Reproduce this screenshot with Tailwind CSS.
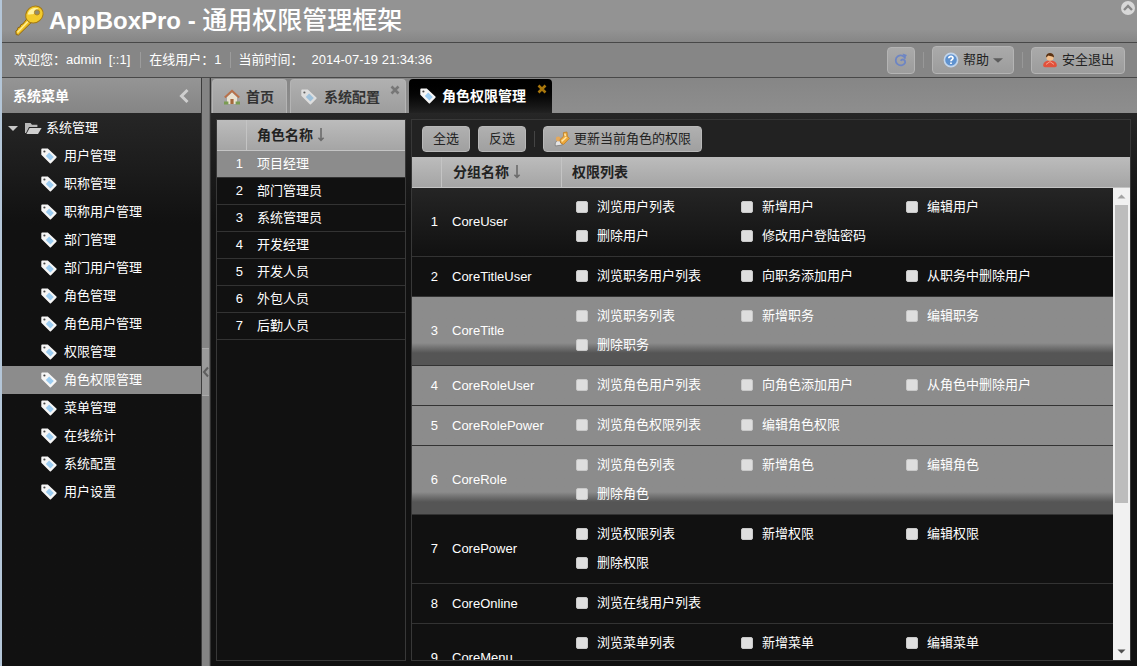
<!DOCTYPE html>
<html lang="zh-CN">
<head>
<meta charset="utf-8">
<title>AppBoxPro - 通用权限管理框架</title>
<script src="https://cdn.jsdelivr.net/npm/@tailwindcss/browser@4"></script>
</head>
<body class="h-screen overflow-hidden bg-[#848484] font-['Liberation_Sans','Noto_Sans_CJK_SC',sans-serif] text-[13px] leading-5 text-white">
<svg class="hidden">
  <symbol id="tag" viewBox="0 0 16 16">
    <path d="M.3 1.4 Q.3 .5 1.2 .5 L6.8 .5 L15.4 8.6 Q16 9.2 15.4 9.8 L10 15.2 Q9.4 15.8 8.8 15.2 L.3 6.8Z" fill="#f6f6f6"/>
    <path d="M8.2 4.4 L12.8 9 L9.4 12.6 L4.8 8Z" fill="#9ccdf2"/>
    <circle cx="3.4" cy="3.5" r="1.1" fill="#444"/>
  </symbol>
  <symbol id="sort" viewBox="0 0 8 14">
    <path d="M4 0V12M1.4 9.8L4 12.4L6.6 9.8" fill="none" stroke="#6b6b6b" stroke-width="1.6"/>
  </symbol>
</svg>
<div class="flex h-full flex-col border-l-2 border-[#b4c6d8]">
  <header class="relative flex h-[43px] shrink-0 items-center border-b border-[#484848] bg-linear-to-b from-[#939393] from-70% to-[#868686] pl-3">
    <svg class="mr-[3px] size-8 shrink-0" viewBox="0 0 32 32">
      <path d="M18.4 16.4L4.5 30 2.2 29.6 1.8 26 3.4 24.8 4 22.6 6 22 6.8 19.8 8.8 19 13.8 12.6Z" fill="#f0c022" stroke="#8d6410" stroke-width="1"/>
      <path d="M15.8 14.6L3.4 27.4" stroke="#fff09a" stroke-width="1.5"/>
      <ellipse cx="20.4" cy="9.6" rx="9.2" ry="8" transform="rotate(-40 20.4 9.6)" fill="#f3cb2c" stroke="#a67a12"/>
      <path d="M13.6 9.4C14.6 4.5 19.2 2 24.4 3.6 22.4 8.8 18.6 10 13.6 9.4Z" fill="#fff3a0"/>
      <circle cx="23" cy="7.4" r="2.6" fill="#8f8b70" stroke="#b88a18"/>
    </svg>
    <h1 class="whitespace-nowrap text-2xl font-bold">AppBoxPro - <span class="text-[25px] font-medium">通用权限管理框架</span></h1>
    <button class="absolute top-0 right-0 h-4 w-[17px]" aria-label="折叠">
      <svg class="size-4" viewBox="0 0 16 16"><circle cx="8" cy="8" r="7" fill="#d8d8d8"/><path d="M4 10L8 6L12 10" fill="none" stroke="#888" stroke-width="2.4"/></svg>
    </button>
  </header>
  <div class="flex h-[35px] shrink-0 items-center border-b border-[#484848] bg-[#868686] pr-3 pl-3 whitespace-nowrap">
    <span>欢迎您：admin&nbsp; [::1]</span>
    <i class="mr-2 ml-[10px] h-4 w-px bg-[#9c9c9c]"></i>
    <span>在线用户：1</span>
    <i class="mx-2 h-4 w-px bg-[#9c9c9c]"></i>
    <span>当前时间：</span><span class="ml-2">2014-07-19 21:34:36</span>
    <div class="ml-auto flex items-center text-[#222]">
      <button class="flex h-[27px] w-7 items-center justify-center rounded border border-[#b4b4b4] bg-linear-to-b from-[#aaa] to-[#9c9c9c]" aria-label="刷新">
        <svg class="size-4" viewBox="0 0 16 16"><path d="M12.4 6.6A5 5 0 1 0 12.2 10.6C12.4 7.4 9.2 6.6 7.6 8.8" fill="none" stroke="#6d85c4" stroke-width="1.8"/><path d="M9.6 1.6L14 3 11.6 6.2Z" fill="#6d85c4"/></svg>
      </button>
      <i class="mx-2 h-4 w-px bg-[#989898]"></i>
      <button class="flex h-[28px] items-center rounded border border-[#b4b4b4] bg-linear-to-b from-[#aaa] to-[#9c9c9c] px-[10px]">
        <svg class="mr-1 size-4" viewBox="0 0 16 16"><circle cx="8" cy="8" r="6.6" fill="#5f92cf" stroke="#c3d6ec" stroke-width="1.6"/><path d="M5.8 6.3C6 3.8 10.2 3.8 10 6.3 9.9 7.6 8 7.8 8 9.2M8 10.4V12" fill="none" stroke="#fff" stroke-width="1.7"/></svg>
        帮助
        <svg class="ml-1 h-3 w-[10px]" viewBox="0 0 11 12"><path d="M0 4H11L5.5 9Z" fill="#5c5c5c"/></svg>
      </button>
      <i class="mx-2 h-4 w-px bg-[#989898]"></i>
      <button class="flex h-[27px] items-center rounded border border-[#b4b4b4] bg-linear-to-b from-[#aaa] to-[#9c9c9c] px-[10px]">
        <svg class="mr-1 size-4" viewBox="0 0 16 16"><path d="M1.2 13.6C1.2 10.4 4 8.6 8 8.6S14.8 10.4 14.8 13.6Q14.8 15.2 13 15.2H3Q1.2 15.2 1.2 13.6Z" fill="#e2513c"/><path d="M4 12.4L8 9.6 12 12.4" stroke="#f6a593" fill="none"/><circle cx="8" cy="5.2" r="3.6" fill="#f3c08e"/><path d="M4 5.4C3.6-.6 12.4-.6 12 5.4 10.6 3.8 8 4.6 6.6 3.4Z" fill="#5a3213"/></svg>
        安全退出
      </button>
    </div>
  </div>
  <div class="flex min-h-0 flex-1">
    <aside class="flex w-[200px] shrink-0 flex-col border-r border-[#3c3c3c] bg-[#111]">
      <div class="flex h-[35px] shrink-0 items-center justify-between bg-linear-to-b from-[#959595] to-[#858585] pr-[9px] pl-[11px]">
        <h2 class="text-sm font-bold">系统菜单</h2>
        <svg class="h-4 w-4" viewBox="0 0 16 16"><path d="M11.5 2L5.5 8L11.5 14" fill="none" stroke="#cfcfcf" stroke-width="3"/></svg>
      </div>
      <nav id="menu" class="flex-1 bg-linear-to-b from-[#262626] via-[#1c1c1c] via-[56px] to-[#111] to-[110px] pt-px">
        <div class="flex h-7 items-center pl-[6px]">
          <svg class="mr-[6px] h-3 w-[10px]" viewBox="0 0 10 12"><path d="M0 4H10L5 9Z" fill="#c8c8c8"/></svg>
          <svg class="mr-1 h-4 w-[18px]" viewBox="0 0 18 16"><path d="M1 13V3H6.5L8 4.8H13.4V7H5L2 13Z" fill="#b9b9b9"/><path d="M5.6 8H17.6L14 14H2.4Z" fill="#cfcfcf"/></svg>
          系统管理
        </div>
      </nav>
    </aside>
    <div class="flex w-2 shrink-0 flex-col border-r border-[#6c6c6c] bg-[#848484]">
      <button class="mt-[270px] flex h-12 items-center border-y border-[#aaa] bg-[#9a9a9a]" aria-label="收起菜单">
        <svg class="h-3 w-[7px]" viewBox="0 0 7 12"><path d="M6 1.5L2 6L6 10.5" fill="none" stroke="#5e5e5e" stroke-width="2"/></svg>
      </button>
    </div>
    <main class="flex min-w-0 flex-1 flex-col border-l border-[#333] bg-[#111]">
      <div class="flex h-[35px] shrink-0 gap-[3px] bg-linear-to-b from-[#868686] to-[#8e8e8e] text-sm font-bold whitespace-nowrap" role="tablist">
        <button class="mt-px ml-px flex h-[34px] items-center rounded-t border border-b-0 border-[#b4b4b4] bg-linear-to-b from-[#b0b0b0] to-[#9d9d9d] pr-3 pl-[11px] text-[#333]" role="tab">
          <svg class="mr-[6px] size-4" viewBox="0 0 16 16"><path d="M3 8V15H13V8L8 3.5Z" fill="#e9e2d2"/><path d="M.8 8.6L8 1.8L15.2 8.6" fill="none" stroke="#b9714a" stroke-width="2"/><path d="M6.4 15V10H9.6V15Z" fill="#a5683c"/><path d="M0 15.4V12.6H4.4V15.4ZM11.6 15.4V12.6H16V15.4Z" fill="#7a9c52"/></svg>
          首页
        </button>
        <button class="relative mt-px flex h-[34px] items-center rounded-t border border-b-0 border-[#b4b4b4] bg-linear-to-b from-[#b0b0b0] to-[#9d9d9d] pr-[25px] pl-[10px] text-[#333]" role="tab">
          <svg class="mr-[7px] size-4 opacity-70"><use href="#tag"/></svg>
          系统配置
          <svg class="absolute top-[5px] right-[5px] size-[10px]" viewBox="0 0 10 10"><path d="M1.5 1.5L8.5 8.5M8.5 1.5L1.5 8.5" stroke="#777" stroke-width="2.6"/></svg>
        </button>
        <button class="relative mt-px flex h-[34px] items-center rounded-t bg-linear-to-b from-black to-[#222] pr-[26px] pl-[11px] text-white" role="tab" aria-selected="true">
          <svg class="mr-[6px] size-4"><use href="#tag"/></svg>
          角色权限管理
          <svg class="absolute top-[5px] right-[5px] size-[10px]" viewBox="0 0 10 10"><path d="M1.5 1.5L8.5 8.5M8.5 1.5L1.5 8.5" stroke="#a8760c" stroke-width="2.6"/></svg>
        </button>
      </div>
      <div class="flex min-h-0 flex-1 gap-[5px] bg-linear-to-b from-[#262626] via-[#1a1a1a] via-[60px] to-[#111] to-[110px] pt-[6px] pr-[6px] pb-[5px] pl-[5px]">
        <section class="w-[190px] shrink-0 border border-[#383838] bg-[#111]">
          <table class="w-full table-fixed border-separate border-spacing-0 text-left">
            <colgroup><col class="w-[30px]"><col></colgroup>
            <thead><tr class="h-[31px] bg-linear-to-b from-[#bcbcbc] to-[#a4a4a4] text-sm text-[#222]">
              <th class="border-r border-b border-[#c4c4c4]"></th>
              <th class="border-b border-[#c4c4c4] pl-[10px]"><span class="flex items-center gap-1">角色名称<svg class="h-[14px] w-2"><use href="#sort"/></svg></span></th>
            </tr></thead>
            <tbody id="roles"></tbody>
          </table>
        </section>
        <section class="flex min-w-0 flex-1 flex-col border border-[#383838] bg-[#111]">
          <div class="flex h-[37px] shrink-0 items-center bg-[#222] pl-[10px] text-[#222]">
            <button class="mr-2 h-[26px] rounded border border-[#b8b8b8] bg-linear-to-b from-[#b0b0b0] to-[#a0a0a0] px-[10px]">全选</button>
            <button class="h-[26px] rounded border border-[#b8b8b8] bg-linear-to-b from-[#b0b0b0] to-[#a0a0a0] px-[10px]">反选</button>
            <i class="mx-2 h-4 w-px bg-[#444]"></i>
            <button class="flex h-[26px] items-center rounded border border-[#b8b8b8] bg-linear-to-b from-[#b0b0b0] to-[#a0a0a0] px-[10px]">
              <svg class="mr-1 size-4" viewBox="0 0 16 16"><path d="M1.4 15C.6 11.6 2.6 9.2 5.4 9.2L8.4 14Z" fill="#e4e4e4" stroke="#7a7a7a" stroke-width=".8"/><circle cx="4.2" cy="8" r="2.4" fill="#e5a95c"/><path d="M6 8.6L9.6 5.2 9.4 1.6 13 1 13.4 5.2 15.4 7.4 9.6 13.4 6.6 12Z" fill="#eda93c" stroke="#b9781e" stroke-width=".7"/><path d="M7.6 10.4L12.4 6M10.8 2.6L11.4 5" stroke="#ffe6a8" stroke-width="1.5"/></svg>
              更新当前角色的权限
            </button>
          </div>
          <table class="w-full shrink-0 table-fixed border-separate border-spacing-0 text-left">
            <colgroup><col class="w-[30px]"><col class="w-[120px]"><col></colgroup>
            <thead><tr class="h-[31px] bg-linear-to-b from-[#bcbcbc] to-[#a4a4a4] text-sm text-[#222]">
              <th class="border-r border-b border-[#c4c4c4]"></th>
              <th class="border-r border-b border-[#c4c4c4] pl-[11px]"><span class="flex items-center gap-1">分组名称<svg class="h-[14px] w-2"><use href="#sort"/></svg></span></th>
              <th class="border-b border-[#c4c4c4] pl-[10px]">权限列表</th>
            </tr></thead>
          </table>
          <div class="flex min-h-0 flex-1">
            <div class="min-w-0 flex-1 overflow-hidden">
              <table class="w-full table-fixed border-separate border-spacing-0 text-left">
                <colgroup><col class="w-[30px]"><col class="w-[120px]"><col></colgroup>
                <tbody id="powers"></tbody>
              </table>
            </div>
            <div class="flex w-[17px] shrink-0 flex-col bg-[#f1f1f1]" aria-hidden="true">
              <svg class="h-[17px] w-full" viewBox="0 0 17 17"><path d="M4.5 10.5H12.5L8.5 6.5Z" fill="#a3a3a3"/></svg>
              <div class="mx-[2px] h-[298px] bg-[#bcbcbc]"></div>
              <svg class="mt-auto h-[17px] w-full" viewBox="0 0 17 17"><path d="M4.5 6.5H12.5L8.5 10.5Z" fill="#505050"/></svg>
            </div>
          </div>
        </section>
      </div>
    </main>
  </div>
</div>
<script>
const menu = ['用户管理','职称管理','职称用户管理','部门管理','部门用户管理','角色管理','角色用户管理','权限管理','角色权限管理','菜单管理','在线统计','系统配置','用户设置'];
document.getElementById('menu').insertAdjacentHTML('beforeend', menu.map(t =>
  `<a href="#" class="flex h-7 items-center pl-[39px] ${t === '角色权限管理' ? 'bg-[#8c8c8c]' : ''}"><svg class="mr-[7px] size-4"><use href="#tag"/></svg>${t}</a>`).join(''));

const roles = ['项目经理','部门管理员','系统管理员','开发经理','开发人员','外包人员','后勤人员'];
document.getElementById('roles').innerHTML = roles.map((t, i) =>
  `<tr class="h-[27px] ${i ? '' : 'bg-[#8c8c8c]'}"><td class="border-b border-[#333] pr-1 text-right">${i + 1}</td><td class="border-b border-[#333] pl-[10px]">${t}</td></tr>`).join('');

const powers = [
  ['CoreUser', '浏览用户列表 新增用户 编辑用户 删除用户 修改用户登陆密码', 'top'],
  ['CoreTitleUser', '浏览职务用户列表 向职务添加用户 从职务中删除用户', ''],
  ['CoreTitle', '浏览职务列表 新增职务 编辑职务 删除职务', 'on'],
  ['CoreRoleUser', '浏览角色用户列表 向角色添加用户 从角色中删除用户', 'on'],
  ['CoreRolePower', '浏览角色权限列表 编辑角色权限', 'on'],
  ['CoreRole', '浏览角色列表 新增角色 编辑角色 删除角色', 'on'],
  ['CorePower', '浏览权限列表 新增权限 编辑权限 删除权限', ''],
  ['CoreOnline', '浏览在线用户列表', ''],
  ['CoreMenu', '浏览菜单列表 新增菜单 编辑菜单 删除菜单', ''],
];
const fill = {
  top: 'bg-linear-to-b from-[#252525] to-[#111]',
  on: 'bg-linear-to-b from-[#8c8c8c] from-[46px] to-[#555] to-[56px]',
  '': '',
};
document.getElementById('powers').innerHTML = powers.map(([name, list, kind], i) =>
  `<tr class="${fill[kind]}"><td class="border-b border-[#333] pr-1 text-right">${i + 1}</td><td class="border-b border-[#333] pl-[10px]">${name}</td>
  <td class="border-b border-[#333] pt-1 pb-[6px] pl-[14px]"><div class="grid grid-cols-[repeat(3,165px)]">${list.split(' ').map(p =>
    `<label class="flex h-[29px] items-center gap-[9px]"><input type="checkbox" class="size-3 appearance-none rounded-xs border border-[#c8c8c8] bg-[#dedede]">${p}</label>`).join('')}</div></td></tr>`).join('');
</script>
</body>
</html>
